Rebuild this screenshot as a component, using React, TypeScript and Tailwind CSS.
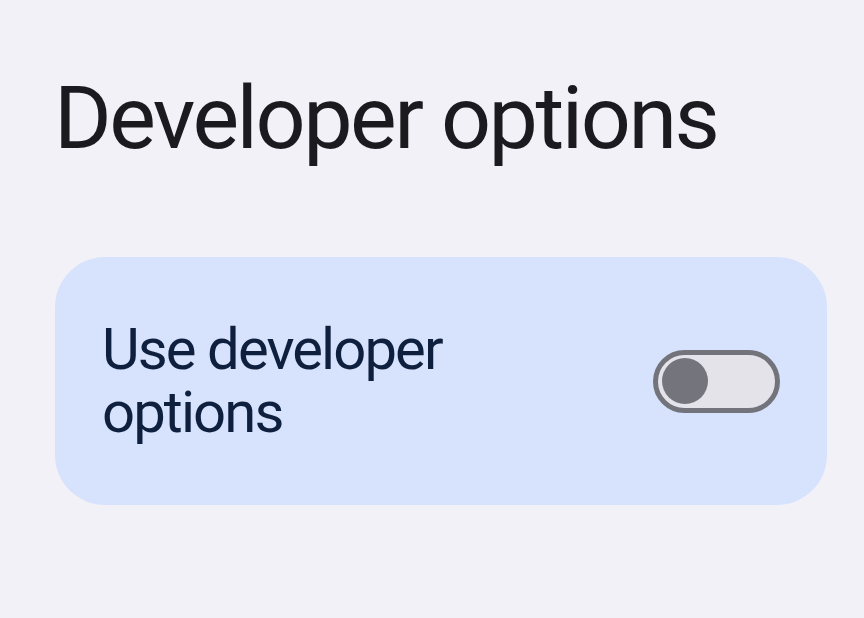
export default function App() {
  return (
    <div
      className="min-h-screen w-[864px] h-[618px] overflow-hidden bg-[#f2f1f7]"
      style={{ fontFamily: "Roboto, 'Noto Sans', sans-serif" }}
    >
      <h1 className="pl-[54px] pt-[66px] text-[88px] leading-[104px] font-normal text-[#1b1b1f] tracking-[-2.5px]">
        Developer options
      </h1>

      <div className="ml-[55px] mr-[37px] mt-[87px] h-[248px] rounded-[50px] bg-[#d7e3fd] pl-[47px] pr-[47px] flex items-center justify-between">
        <p className="w-[400px] text-[58px] leading-[63px] text-[#0f1f3e] tracking-[-1.9px]">Use developer options</p>
        <button
          role="switch"
          aria-checked="false"
          className="w-[127px] h-[63px] rounded-full border-[5px] border-[#72737b] bg-[#e3e3e9] flex items-center pl-[4px]"
        >
          <span className="block w-[46px] h-[46px] rounded-full bg-[#73747c]" />
        </button>
      </div>
    </div>
  )
}
